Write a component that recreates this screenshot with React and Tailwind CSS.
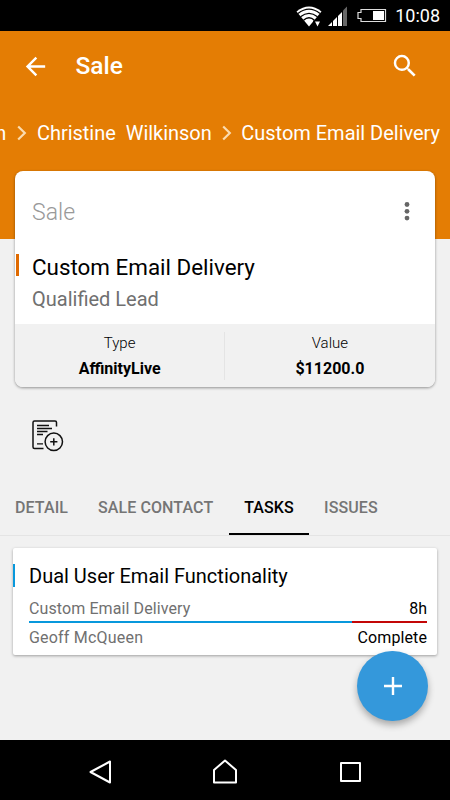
import React from "react";

function StatusBar() {
  return (
    <div className="flex h-[31px] items-center justify-end bg-black pr-[10px]">
      <svg width="96" height="31" viewBox="294 0 96 31" className="mr-[5px] shrink-0">
        <path d="M309 26.500 L296.500 11.500 Q309 1.500 321.500 11.500 Z" fill="#fff" />
        <g fill="none" stroke="#000" strokeWidth="1.300">
          <path d="M298 13.500 Q309 4.800 320 13.500" />
          <path d="M300.500 16.800 Q309 9.800 317.500 16.800" />
          <path d="M303.500 20.200 Q309 15.200 314.500 20.200" />
        </g>
        <path d="M313 20.500 H321.500 V23 L317.500 27.500 L313 23 Z" fill="#000" />
        <path d="M315 21.500 H320 L317.500 26.500 Z" fill="#fff" />
        <path d="M347 6.500 V26 H343 V10.500 Z" fill="#666" />
        <path d="M342 12 V26 H338 V16 Z" fill="#fff" />
        <path d="M337 17 V26 H333 V21 Z" fill="#fff" />
        <path d="M332 22 V26 H328 Z" fill="#fff" />
        <path d="M361 9.500 H385.500 V21.500 H361 V18.500 H358 V12.500 H361 Z" fill="none" stroke="#ddd" strokeWidth="1.200" />
        <rect x="373" y="11" width="11" height="9" fill="#fff" />
      </svg>
      <span className="relative top-[0.500px] text-[18px] leading-none text-white">10:08</span>
    </div>
  );
}

function Chevron() {
  return (
    <svg width="10" height="16" viewBox="0 0 10 16" className="shrink-0">
      <path d="M1.200 1.500 L7.800 8 L1.200 14.500" fill="none" stroke="#fbdcb0" strokeWidth="2.200" />
    </svg>
  );
}

function Header() {
  return (
    <header className="h-[208px] bg-[#e47d04] text-white">
      <div className="flex h-[70px] items-center pr-[30px] pl-[20.500px]">
        <svg width="29" height="29" viewBox="0 0 24 24" fill="#fff">
          <path d="M20 11H7.830l5.590-5.590L12 4l-8 8 8 8 1.410-1.410L7.830 13H20v-2z" />
        </svg>
        <h1 className="ml-[26px] text-[24.500px] leading-[28px] font-medium">Sale</h1>
        <svg width="30" height="30" viewBox="0 0 24 24" fill="#fff" className="ml-auto">
          <path d="M15.500 14h-.79l-.28-.27A6.471 6.471 0 0 0 16 9.500 6.500 6.500 0 1 0 9.500 16c1.610 0 3.090-.59 4.230-1.570l.27.28v.79l5 4.990L20.490 19l-4.990-5zm-6 0C7.010 14 5 11.990 5 9.500S7.010 5 9.500 5 14 7.010 14 9.500 11.990 14 9.500 14z" />
        </svg>
      </div>
      <nav className="flex h-[64px] items-center justify-end overflow-hidden pr-[10px] text-[20px] leading-[24px] whitespace-pre">
        <span>n</span>
        <span className="mr-[10px] ml-[10.500px] flex"><Chevron /></span>
        <span className="tracking-[-0.02px]">Christine  Wilkinson</span>
        <span className="mr-[9px] ml-[10.500px] flex"><Chevron /></span>
        <span className="tracking-[-0.02px]">Custom Email Delivery</span>
      </nav>
    </header>
  );
}

function SaleCard() {
  return (
    <section className="mr-[15.500px] ml-[15px] -mt-[68px] h-[216px] overflow-hidden rounded-[8px] bg-white shadow-[0_1px_3px_rgba(0,0,0,0.4)]">
      <div className="flex h-[82px] items-center justify-between pr-[25px] pl-[17px]">
        <span className="pt-[2px] text-[23px] leading-[28px] font-light text-[#999]">Sale</span>
        <svg width="6" height="20" viewBox="0 0 6 20" fill="#666">
          <circle cx="3" cy="2.500" r="2.400" />
          <circle cx="3" cy="9.300" r="2.400" />
          <circle cx="3" cy="16.100" r="2.400" />
        </svg>
      </div>
      <div className="flex h-[25px] items-start">
        <span className="mt-px ml-px h-[22px] w-[3px] bg-[#e06a00]" />
        <h2 className="ml-[13px] text-[22.400px] leading-[29px] text-black">Custom Email Delivery</h2>
      </div>
      <p className="mt-[9px] h-[37px] pl-[17px] text-[20px] leading-[24px] text-[#707070]">Qualified Lead</p>
      <div className="flex h-[63px] items-center bg-[#f1f1f1] text-center text-black">
        <div className="flex-1">
          <div className="text-[15px] leading-[26px] font-light">Type</div>
          <div className="text-[16px] leading-[26px] font-bold">AffinityLive</div>
        </div>
        <div className="h-[48px] w-px bg-[#e4e4e4]" />
        <div className="flex-1">
          <div className="text-[15px] leading-[26px] font-light">Value</div>
          <div className="text-[16px] leading-[26px] font-bold">$11200.0</div>
        </div>
      </div>
    </section>
  );
}

function AddNoteIcon() {
  return (
    <svg width="32" height="32" viewBox="0 0 32 32" fill="none" stroke="#111" strokeWidth="1.500">
      <path d="M24.500 6.500 V2.500 Q24.500 1 23 1 H2.500 Q1 1 1 2.500 V27 Q1 28.500 2.500 28.500 H11.500" />
      <path d="M5 5.500 H17 M5 8.500 H20 M5 11.500 H15.500 M5 14.500 H11 M5 23.800 H11" strokeWidth="1.300" />
      <circle cx="21.800" cy="21.800" r="8.700" />
      <path d="M21.800 18.200 V25.400 M18.200 21.800 H25.400" />
    </svg>
  );
}

function Tabs() {
  return (
    <div className="flex h-[56px] border-b border-[#e4e4e4] pl-[15px] text-[16px] leading-[55px] font-medium tracking-[0.1px] text-[#757575]">
      <span className="w-[83px]">DETAIL</span>
      <span className="w-[131px] whitespace-nowrap">SALE CONTACT</span>
      <span className="h-[55px] w-[80px] border-b-2 border-black text-center text-black">TASKS</span>
      <span className="ml-[15px]">ISSUES</span>
    </div>
  );
}

function TaskCard() {
  return (
    <article className="mx-[13px] mt-[12px] h-[107px] rounded-[2px] bg-white pt-[16px] pr-[10px] shadow-[0_1px_3px_rgba(0,0,0,0.35)]">
      <div className="flex h-[24px] items-start">
        <span className="h-[23px] w-[2px] bg-[#0898dc]" />
        <h3 className="ml-[14px] text-[20px] leading-[25px] text-black">Dual User Email Functionality</h3>
      </div>
      <div className="ml-[16px]">
        <div className="mt-[9px] flex h-[24px] justify-between text-[16px] leading-[24px]">
          <span className="tracking-[0.1px] text-[#707070]">Custom Email Delivery</span>
          <span className="text-black">8h</span>
        </div>
        <div className="flex h-[2px]">
          <span className="w-[323px] bg-[#0898dc]" />
          <span className="flex-1 bg-[#c30606]" />
        </div>
        <div className="mt-[3px] flex justify-between text-[16px] leading-[24px]">
          <span className="tracking-[0.2px] text-[#707070]">Geoff McQueen</span>
          <span className="tracking-[0.1px] text-black">Complete</span>
        </div>
      </div>
    </article>
  );
}

function NavBar() {
  return (
    <svg width="450" height="60" viewBox="0 740 450 60" className="block bg-black" fill="none" stroke="#fff" strokeWidth="2" strokeLinejoin="round">
      <path d="M110 761.500 V782.500 L90.500 772 Z" />
      <path d="M225 760.500 L236 770 V782.500 H214 V770 Z" />
      <rect x="341" y="763" width="19" height="18" />
    </svg>
  );
}

export default function App() {
  return (
    <div className="relative flex h-[800px] w-[450px] flex-col overflow-hidden bg-[#f1f1f1] font-['Roboto',sans-serif]">
      <StatusBar />
      <Header />
      <SaleCard />
      <div className="flex h-[93px] pt-[33px] pl-[32px]">
        <AddNoteIcon />
      </div>
      <Tabs />
      <TaskCard />
      <button aria-label="Add task" className="absolute top-[651px] left-[357px] flex h-[70px] w-[71px] items-center justify-center rounded-full bg-[#3498db] shadow-[0_4px_7px_rgba(0,0,0,0.3)]">
        <svg width="18" height="18" viewBox="0 0 18 18" stroke="#fff" strokeWidth="2.400">
          <path d="M9 0 V18 M0 9 H18" />
        </svg>
      </button>
      <div className="mt-auto">
        <NavBar />
      </div>
    </div>
  );
}
